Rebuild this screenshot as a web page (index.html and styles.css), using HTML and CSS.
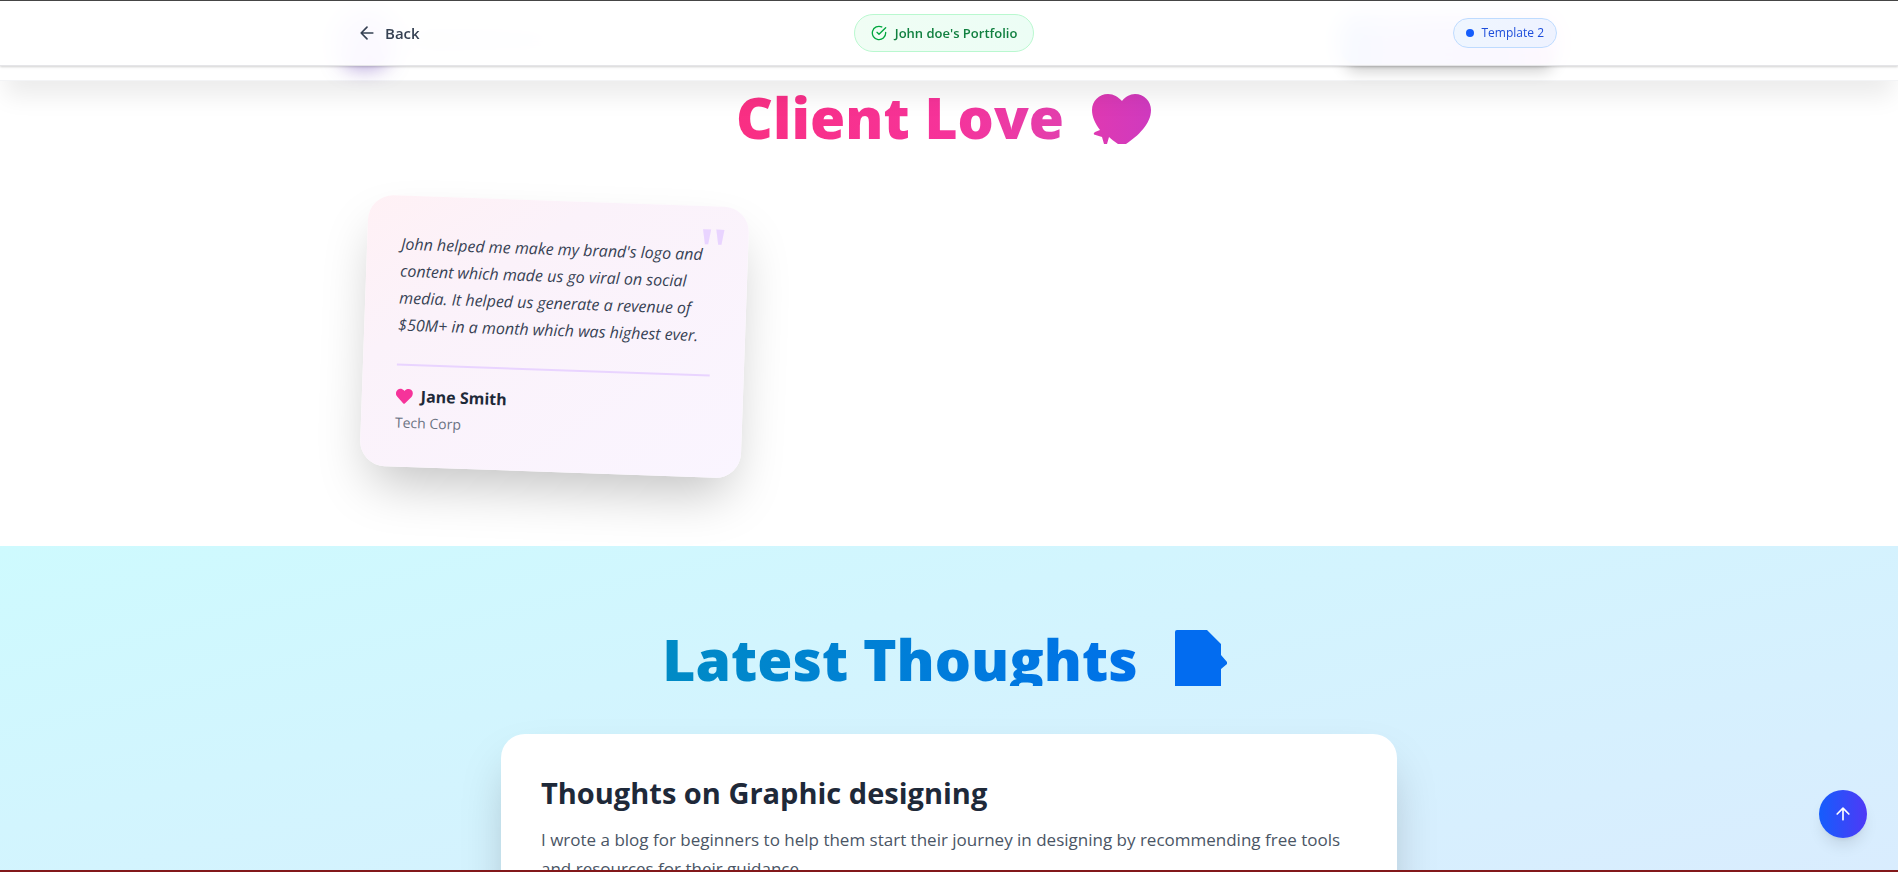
FILE: index.html
```html
<!DOCTYPE html>
<html lang="en">
<head>
<meta charset="utf-8">
<title>John doe's Portfolio</title>
<link rel="stylesheet" href="styles.css">
</head>
<body>
<header class="topbar">
  <div class="topbar-inner">
    <button class="back" type="button">
      <svg class="icon-md" viewBox="0 0 24 24" aria-hidden="true"><path d="M12 19l-7-7 7-7M19 12H5"/></svg>
      Back
    </button>
    <div class="owner">
      <svg class="icon-sm" viewBox="0 0 24 24" aria-hidden="true"><path d="M22 11.1V12a10 10 0 1 1-5.9-9.1"/><path d="M22 4L12 14l-3-3"/></svg>
      John doe's Portfolio
    </div>
    <div class="template"><span class="dot"></span>Template 2</div>
  </div>
</header>
<div class="site-nav" aria-hidden="true">
  <div class="site-nav-inner">
    <div class="brand"><span class="brand-mark"></span><span class="brand-line"></span></div>
    <span class="nav-cta"></span>
  </div>
</div>
<main>
  <section class="love">
    <h2 class="heading heading-love"><span>Client Love</span>
      <svg class="glyph" viewBox="0 0 82 60" aria-hidden="true">
        <defs><linearGradient id="love" x1="0" x2="1"><stop offset="0" stop-color="#df39b2"/><stop offset="1" stop-color="#cf3abf"/></linearGradient></defs>
        <path fill="url(#love)" d="M38 60C34 57 31 55 29 53L27 60H24L22 53L14 50.500Q13 49 15 48L20 46C15 39 12 33 12 26C12 17 19 10 28 10C34 10 38 13 42 17C45 13 50 10 55 10C64 10 71 17 71 26C71 40 58 52 46 60Z"/>
      </svg>
    </h2>
    <div class="quotes">
      <article class="quote">
        <span class="mark" aria-hidden="true">"</span>
        <p class="quote-text">John helped me make my brand's logo and content which made us go viral on social media. It helped us generate a revenue of $50M+ in a month which was highest ever.</p>
        <div class="author">
          <div class="name"><svg class="heart" viewBox="0 0 512 512" aria-hidden="true"><path d="M462.300 62.600C407.500 15.900 326 24.300 275.700 76.200L256 96.500l-19.700-20.300C186.100 24.300 104.500 15.900 49.700 62.600c-62.800 53.600-66.100 149.800-9.900 207.900l193.500 199.800c12.500 12.900 32.800 12.900 45.300 0l193.500-199.800c56.300-58.100 53-154.300-9.800-207.900z"/></svg>Jane Smith</div>
          <div class="company">Tech Corp</div>
        </div>
      </article>
    </div>
  </section>
  <section class="thoughts">
    <h2 class="heading heading-thoughts"><span>Latest Thoughts</span>
      <svg class="glyph" viewBox="0 0 82 60" aria-hidden="true">
        <path fill="#026cf0" d="M23 4H53L67 18V29L73 36V38L67 43V60H21V6Q21 4 23 4Z"/>
      </svg>
    </h2>
    <article class="post">
      <h3>Thoughts on Graphic designing</h3>
      <p>I wrote a blog for beginners to help them start their journey in designing by recommending free tools and resources for their guidance.</p>
    </article>
  </section>
</main>
<button class="to-top" type="button" aria-label="Back to top">
  <svg class="icon-md" viewBox="0 0 24 24" aria-hidden="true"><path d="M5 12l7-7 7 7M12 19V5"/></svg>
</button>
<div class="bottom-edge"></div>
</body>
</html>
```
FILE: styles.css
```css
* { box-sizing: border-box; margin: 0; }
body {
  height: 100vh;
  overflow: hidden;
  background: #fff;
  font-family: "Open Sans", "Noto Sans", sans-serif;
  font-size: 16px;
  line-height: 24px;
}
button { font: inherit; border: 0; background: none; cursor: pointer; }
svg { display: block; flex: none; }
.icon-md, .icon-sm { fill: none; stroke: currentColor; stroke-width: 2; stroke-linecap: round; stroke-linejoin: round; }
.icon-md { width: 20px; height: 20px; }
.icon-sm { width: 16px; height: 16px; }

.topbar {
  position: fixed;
  inset: 0 0 auto;
  z-index: 20;
  border-top: 1px solid #454545;
  border-bottom: 1px solid #e5e5e8;
  background: rgba(255, 255, 255, .9);
  backdrop-filter: blur(12px);
  box-shadow: 0 1px 3px rgba(0, 0, 0, .1), 0 1px 2px rgba(0, 0, 0, .1);
}
.topbar-inner {
  max-width: 1280px;
  height: 64px;
  margin: 0 auto;
  padding: 0 32px;
  display: flex;
  align-items: center;
  justify-content: space-between;
}
.back { display: flex; align-items: center; gap: 8px; padding: 8px 16px; color: #364153; font-weight: 600; font-size: 15px; }
.owner {
  display: flex; align-items: center; gap: 8px;
  padding: 8px 16px;
  border: 1px solid #b9f8cf;
  border-radius: 20px;
  background: linear-gradient(to right, #f0fdf4, #ecfdf5);
  color: #118040;
  font-size: 13px; line-height: 20px; font-weight: 600;
}
.owner svg { color: #00a63e; }
.template {
  display: flex; align-items: center; gap: 8px;
  padding: 6px 12px;
  border: 1px solid #bedbff;
  border-radius: 16px;
  background: linear-gradient(to right, #eff6ff, #eef2ff);
  color: #1d4ddb;
  font-size: 12px; line-height: 16px; font-weight: 500;
}
.dot { width: 8px; height: 8px; border-radius: 50%; background: #155dfc; }

.site-nav {
  position: relative;
  z-index: 10;
  background: #fff;
  border-bottom: 1px solid #f3f4f6;
  box-shadow: 0 20px 25px -5px rgba(0, 0, 0, .08);
}
.site-nav-inner {
  max-width: 1280px;
  margin: 0 auto;
  padding: 16px 32px;
  display: flex; align-items: center; justify-content: space-between;
}
.brand { display: flex; align-items: center; gap: 24px; }
.brand-mark { width: 48px; height: 48px; border-radius: 16px; background: linear-gradient(135deg, #ddd6fe, #c9a8ff); box-shadow: 0 4px 20px rgba(100, 60, 180, .5); }
.brand-line { width: 140px; height: 12px; border-radius: 6px; background: linear-gradient(to right, #ddd, #e8e4ff); }
.nav-cta { width: 216px; height: 48px; border-radius: 16px; background: linear-gradient(to right, #9cbcff, #c9c4ff 20%, #c4b5fd 70%, #efb4f5); box-shadow: 0 10px 15px -3px rgba(0, 0, 0, .2), 0 4px 6px -4px rgba(0, 0, 0, .2); }

.heading {
  display: flex; justify-content: center; gap: 16px;
  margin: 0 auto;
  padding-top: 6px;
  font-size: 57px; line-height: 54px; font-weight: 800;
  color: transparent;
  -webkit-background-clip: text;
  background-clip: text;
}
.heading-love { max-width: 1152px; background-image: linear-gradient(to right in oklab, #ff2056, #f6339a, #9940f8); }
.heading-thoughts { max-width: 896px; background-image: linear-gradient(to right in oklab, #0092b8, #155dfc); }
.glyph { width: 82px; height: 60px; margin-top: -6px; }

.love { padding: 3px 24px 74px; }
.quotes {
  max-width: 1170px;
  margin: 57px auto 0;
  display: grid; grid-template-columns: repeat(3, 1fr); gap: 14px;
}
.quote {
  position: relative;
  padding: 35px 34px 34px;
  border-radius: 25px;
  background: linear-gradient(to bottom right, #fff1f5, #fbf2fa 30%, #faf5ff);
  box-shadow: 0 26px 52px -12px rgba(0, 0, 0, .25);
  transform: rotate(2deg);
}
.mark { position: absolute; top: 12px; right: 17px; font-family: "Liberation Serif", serif; font-size: 64px; line-height: 64px; font-weight: 700; color: #e9d4ff; }
.quote-text { position: relative; margin-bottom: 25px; color: #364153; font-size: 16px; line-height: 27px; font-style: italic; }
.author { padding-top: 17px; border-top: 2px solid #e9d4ff; }
.name { display: flex; align-items: center; gap: 8px; color: #1e2939; font-size: 16px; line-height: 26px; font-weight: 700; }
.heart { width: 17px; height: 17px; fill: #f6339a; }
.company { padding-top: 3px; color: #6a7282; font-size: 14px; line-height: 21px; }

.thoughts {
  padding: 80px 24px;
  background: linear-gradient(to bottom right, #cefafe, #dbeafe);
}
.post {
  max-width: 896px;
  margin: 48px auto 0;
  padding: 40px;
  border-radius: 24px;
  background: #fff;
  box-shadow: 0 25px 50px -12px rgba(0, 0, 0, .25);
}
.post h3 { margin-bottom: 13px; color: #1e2939; font-size: 29px; line-height: 38px; font-weight: 700; }
.post p { color: #4a5565; font-size: 17px; line-height: 29px; }

.to-top {
  position: fixed; right: 31px; bottom: 34px; z-index: 20;
  display: grid; place-items: center;
  width: 48px; height: 48px; padding: 0;
  border-radius: 50%;
  background: linear-gradient(to right, #155dfc, #4f39f6);
  box-shadow: 0 10px 15px -3px rgba(0, 0, 0, .1), 0 4px 6px -4px rgba(0, 0, 0, .1);
  color: #fff;
}
.bottom-edge { position: fixed; inset: auto 0 0; z-index: 30; height: 2px; background: #82181a; }
```
